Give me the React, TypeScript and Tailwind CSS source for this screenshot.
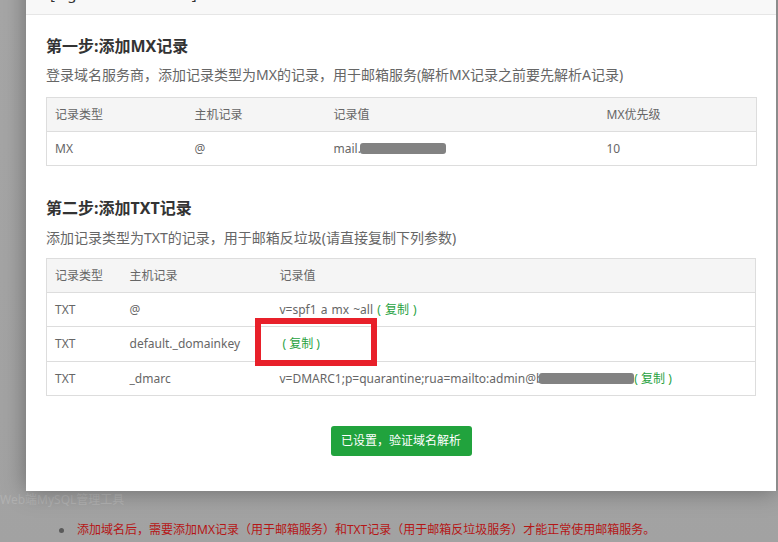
import React from "react";

const FONT = { fontFamily: '"Noto Sans", "Noto Sans CJK SC", sans-serif' };

function Copy() {
  return <span className="text-[#27a23f]">(&nbsp;复制&nbsp;)</span>;
}

function Blob({ w, ml = 0 }: { w: number; ml?: number }) {
  return (
    <span
      className="inline-block h-[11px] rounded-[3px] bg-[#828282] align-[-1px]"
      style={{ width: w, marginLeft: ml }}
    />
  );
}

export default function App() {
  return (
    <div
      className="relative w-[778px] h-[542px] overflow-hidden bg-gradient-to-b from-[#a6a6a6] to-[#a2a2a2]"
      style={FONT}
    >
      {/* page behind the overlay */}
      <div className="pt-[489px]">
        <div className="h-[22px] leading-[22px] text-[12px] text-[#b1b1b1]">Web端MySQL管理工具</div>
        <ul className="mt-[8px] pl-[59px]">
          <li className="flex items-center gap-[13px] h-[22px] text-[12px] text-[#b51616]">
            <span className="w-[5px] h-[5px] rounded-full bg-[#5a5a5a]" />
            <span>添加域名后，需要添加MX记录（用于邮箱服务）和TXT记录（用于邮箱反垃圾服务）才能正常使用邮箱服务。</span>
          </li>
        </ul>
      </div>

      {/* modal */}
      <div className="absolute left-[26px] top-[-26px] w-[750px] bg-white shadow-[0_0_22px_rgba(0,0,0,0.35)]">
        <div className="h-[41px] bg-[#f8f8f8] border-b border-[#e6e6e6] px-[24px] flex items-start">
          <span className="mt-[12px] text-[15px] leading-[15px] text-[#333]">[ agentdomain.com ]</span>
        </div>
        <div className="px-[20px] pt-[19px] pb-[35px]">
          <h2 className="h-[24px] leading-[24px] text-[16px] font-bold text-[#333]">第一步:添加MX记录</h2>
          <p className="mt-[7px] h-[20px] leading-[20px] text-[14px] text-[#666]">
            登录域名服务商，添加记录类型为MX的记录，用于邮箱服务(解析MX记录之前要先解析A记录)
          </p>
          <table className="mt-[12px] w-[710px] table-fixed border-collapse border border-[#dddddd] text-[12px] text-[#666]">
            <thead>
              <tr className="bg-[#f5f5f5] h-[34px]">
                <th className="w-[140px] pl-[8px] text-left font-normal">记录类型</th>
                <th className="w-[139px] pl-[8px] text-left font-normal">主机记录</th>
                <th className="w-[273px] pl-[8px] text-left font-normal">记录值</th>
                <th className="w-[158px] pl-[8px] text-left font-normal">MX优先级</th>
              </tr>
            </thead>
            <tbody>
              <tr className="h-[34px] border-t border-[#dddddd]">
                <td className="pl-[8px]">MX</td>
                <td className="pl-[8px]">@</td>
                <td className="pl-[8px] whitespace-nowrap">
                  mail.<Blob w={86} ml={-1} />
                </td>
                <td className="pl-[8px]">10</td>
              </tr>
            </tbody>
          </table>

          <h2 className="mt-[30px] h-[24px] leading-[24px] text-[16px] font-bold text-[#333]">第二步:添加TXT记录</h2>
          <p className="mt-[8px] h-[20px] leading-[20px] text-[14px] text-[#666]">
            添加记录类型为TXT的记录，用于邮箱反垃圾(请直接复制下列参数)
          </p>
          <table className="mt-[10px] w-[710px] table-fixed border-collapse border border-[#dddddd] text-[12px] text-[#666]">
            <thead>
              <tr className="bg-[#f5f5f5] h-[34px]">
                <th className="w-[75px] pl-[8px] text-left font-normal">记录类型</th>
                <th className="w-[150px] pl-[8px] text-left font-normal">主机记录</th>
                <th className="pl-[8px] text-left font-normal">记录值</th>
              </tr>
            </thead>
            <tbody>
              <tr className="h-[34px] border-t border-[#dddddd]">
                <td className="pl-[8px]">TXT</td>
                <td className="pl-[8px]">@</td>
                <td className="pl-[8px] whitespace-nowrap [word-spacing:1px]">
                  v=spf1 a mx ~all <Copy />
                </td>
              </tr>
              <tr className="h-[35px] border-t border-[#dddddd]">
                <td className="pl-[8px]">TXT</td>
                <td className="pl-[8px]">default._domainkey</td>
                <td className="pl-[11px] whitespace-nowrap">
                  <Copy />
                </td>
              </tr>
              <tr className="h-[34px] border-t border-[#dddddd]">
                <td className="pl-[8px]">TXT</td>
                <td className="pl-[8px]">_dmarc</td>
                <td className="pl-[8px] whitespace-nowrap">
                  v=DMARC1;p=quarantine;rua=mailto:admin@b
                  <Blob w={95} ml={-4} />
                  <Copy />
                </td>
              </tr>
            </tbody>
          </table>

          <div className="mt-[30px] flex justify-center">
            <button className="h-[30px] w-[141px] rounded-[3px] bg-[#21a33d] text-[12px] text-white">
              已设置，验证域名解析
            </button>
          </div>
        </div>
      </div>

      {/* annotation box */}
      <div className="absolute left-[255px] top-[318px] w-[122px] h-[48px] border-[6px] border-[#e8202a]" />

      {/* right edge strip */}
      <div className="absolute right-0 top-0 w-[2px] h-[490px] bg-[#8c8c8c]" />
    </div>
  );
}
